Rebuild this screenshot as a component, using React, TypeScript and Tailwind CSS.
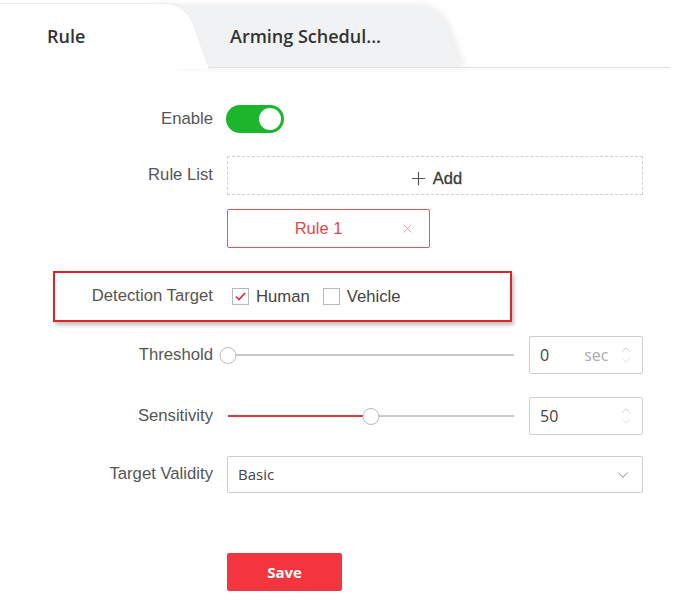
import { Plus, X, ChevronDown, ChevronUp } from "lucide-react"

const label = "text-right text-[16.7px] text-[#555] font-['Liberation_Sans',Arial,sans-serif] leading-none"

function Spinner() {
  return (
    <div className="absolute right-[9px] top-1/2 -translate-y-1/2 flex flex-col items-center text-[#b5b5b5]">
      <ChevronUp size={14} strokeWidth={1.2} className="-mb-[3px]" />
      <ChevronDown size={14} strokeWidth={1.2} className="text-[#d0d0d0]" />
    </div>
  )
}

function Slider({ value }: { value: number }) {
  const pct = value / 100
  return (
    <div className="relative w-[286px] h-[20px] flex items-center">
      <div className="absolute left-0 right-0 h-[2px] bg-[#c9c9c9]" />
      <div className="absolute left-0 h-[2px] bg-[#e0373e]" style={{ width: `${pct * 100}%` }} />
      <div
        className="absolute w-[17px] h-[17px] rounded-full border border-[#b9b9b9] bg-white -translate-x-1/2"
        style={{ left: `${pct * 100}%` }}
      />
    </div>
  )
}

function Checkbox({ checked }: { checked?: boolean }) {
  return (
    <span className="w-[17px] h-[17px] border border-[#b8b8b8] bg-white flex items-center justify-center">
      {checked && (
        <svg width="13" height="13" viewBox="0 0 13 13">
          <polyline points="2,6.5 5,9.5 11,3" fill="none" stroke="#e0262c" strokeWidth="1.6" />
        </svg>
      )}
    </span>
  )
}

export default function App() {
  return (
    <div className="w-[674px] h-[602px] bg-white overflow-hidden relative">
      {/* tabs */}
      <div className="relative flex h-[69px]">
        <div className="relative z-10 w-[198px] mt-[3px] h-[66px] flex items-center pl-[47px]">
          <span className="absolute inset-y-0 left-[-40px] right-0 bg-white skew-x-[20deg] rounded-tr-[20px] border-t border-r border-[#ececec]" />
          <span className="relative text-[18px] font-semibold text-[#333] font-['Open_Sans',sans-serif]">Rule</span>
        </div>
        <div className="relative w-[251px] mt-[4px] h-[64px] flex items-center pl-[32px]">
          <span className="absolute inset-y-0 left-[-40px] right-0 bg-[#f1f2f4] skew-x-[20deg] rounded-tr-[22px] shadow-[5px_0_7px_rgba(0,0,0,0.07)]" />
          <span className="relative text-[18px] font-semibold text-[#333] font-['Open_Sans',sans-serif]">Arming Schedul...</span>
        </div>
        <div className="absolute z-[5] bottom-[1px] left-0 right-[4px] h-px bg-[#e2e2e2]" />
      </div>

      {/* Enable */}
      <div className="flex items-center mt-[36px] h-[28px]">
        <div className={`w-[213px] ${label}`}>Enable</div>
        <div className="ml-[13px] w-[58px] h-[28px] rounded-full bg-[#1db52b] flex items-center justify-end pr-[3px]">
          <div className="w-[22px] h-[22px] rounded-full bg-white" />
        </div>
      </div>

      {/* Rule List */}
      <div className="flex items-center mt-[23px] h-[39px]">
        <div className={`w-[213px] ${label}`}>Rule List</div>
        <div className="ml-[14px] w-[416px] h-[39px] pt-[6px] border border-dashed border-[#cfcfcf] flex items-center justify-center gap-[4px] text-[#3a3a3a]">
          <Plus size={21} strokeWidth={1.3} className="text-[#555]" />
          <span className="text-[16.5px] font-['Liberation_Sans',Arial,sans-serif] [-webkit-text-stroke:0.3px_#3a3a3a]">Add</span>
        </div>
      </div>

      <div className="flex mt-[14px]">
        <div className="ml-[227px] relative w-[203px] h-[39px] border border-[#e9545a] rounded-[2px] flex items-center justify-center">
          <span className="text-[16.5px] text-[#e4474d] font-['Liberation_Sans',Arial,sans-serif] -ml-[20px]">Rule 1</span>
          <X size={15} strokeWidth={1.2} className="absolute right-[14px] text-[#f08c8f]" />
        </div>
      </div>

      {/* Detection Target highlight */}
      <div className="ml-[53px] mt-[23px] w-[459px] h-[51px] border-2 border-[#d8262b] shadow-[2px_3px_4px_rgba(0,0,0,0.25)] flex items-center">
        <div className={`w-[158px] ${label}`}>Detection Target</div>
        <div className="ml-[19px]"><Checkbox checked /></div>
        <span className="ml-[7px] text-[16.7px] text-[#444] font-['Liberation_Sans',Arial,sans-serif]">Human</span>
        <div className="ml-[13px]"><Checkbox /></div>
        <span className="ml-[7px] text-[16.7px] text-[#444] font-['Liberation_Sans',Arial,sans-serif]">Vehicle</span>
      </div>

      {/* Threshold */}
      <div className="flex items-center mt-[14px] h-[38px]">
        <div className={`w-[213px] ${label}`}>Threshold</div>
        <div className="ml-[15px]"><Slider value={0} /></div>
        <div className="ml-[15px] relative w-[114px] h-[38px] border border-[#cdcdcd] rounded-[2px] flex items-center pl-[10px] font-['Open_Sans',sans-serif] text-[16px]">
          <span className="text-[#444]">0</span>
          <span className="ml-[35px] text-[#aaa]">sec</span>
          <Spinner />
        </div>
      </div>

      {/* Sensitivity */}
      <div className="flex items-center mt-[23px] h-[38px]">
        <div className={`w-[213px] ${label}`}>Sensitivity</div>
        <div className="ml-[15px]"><Slider value={50} /></div>
        <div className="ml-[15px] relative w-[114px] h-[38px] border border-[#cdcdcd] rounded-[2px] flex items-center pl-[10px] font-['Open_Sans',sans-serif] text-[16px]">
          <span className="text-[#444]">50</span>
          <Spinner />
        </div>
      </div>

      {/* Target Validity */}
      <div className="flex items-center mt-[21px] h-[37px]">
        <div className={`w-[213px] ${label}`}>Target Validity</div>
        <div className="ml-[14px] relative w-[416px] h-[37px] border border-[#cdcdcd] rounded-[2px] flex items-center pl-[10px]">
          <span className="text-[15px] text-[#444] font-['Open_Sans',sans-serif]">Basic</span>
          <ChevronDown size={18} strokeWidth={1.3} className="absolute right-[10px] text-[#888]" />
        </div>
      </div>

      {/* Save */}
      <div className="flex mt-[60px]">
        <button className="ml-[227px] w-[115px] h-[38px] rounded-[2px] bg-[#f2353e] text-white text-[15px] font-bold font-['Open_Sans',sans-serif]">
          Save
        </button>
      </div>
    </div>
  )
}
